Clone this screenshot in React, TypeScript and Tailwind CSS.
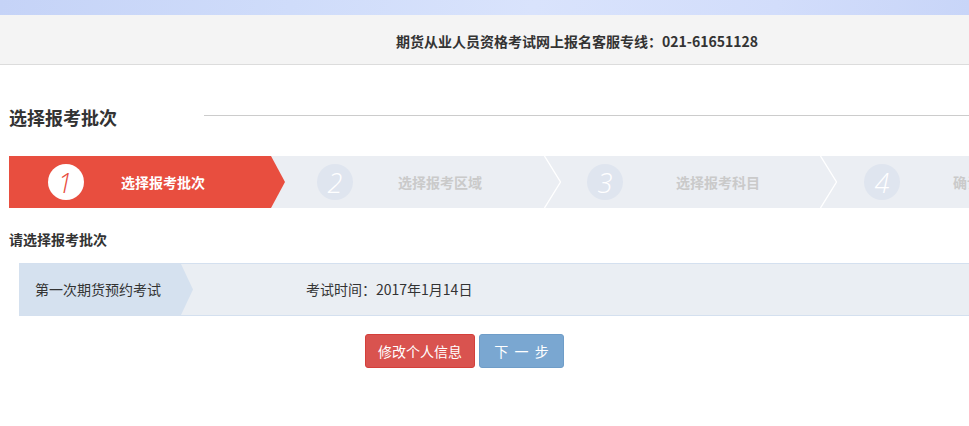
import React from "react";

const font = { fontFamily: '"Noto Sans CJK SC", "Noto Sans", sans-serif' };

function Chevron() {
  return (
    <svg width="17" height="52" viewBox="0 0 17 52" className="shrink-0">
      <polyline points="0.5,0 16.5,26 0.5,52" fill="none" stroke="#ffffff" strokeWidth="1.3" />
    </svg>
  );
}

export default function App() {
  return (
    <div className="w-[969px] h-[426px] bg-white overflow-hidden" style={font}>
      {/* banner */}
      <div className="h-[15px] bg-[linear-gradient(100deg,#c5d3f7_0%,#cfdcfa_30%,#d9e3fc_55%,#d2ddfb_80%,#c8d5f8_100%)]" />
      {/* header */}
      <div className="h-[50px] bg-[#f4f4f4] border-b border-[#dcdcdc] flex items-center pl-[396px] pt-[2px]">
        <span className="text-[14px] leading-[20px] font-bold text-[#333]">
          期货从业人员资格考试网上报名客服专线：021-61651128
        </span>
      </div>

      {/* title */}
      <div className="flex items-center mt-[39px] h-[26px]">
        <h2 className="pl-[9px] text-[18px] leading-[26px] font-bold text-[#333] w-[204px] shrink-0">选择报考批次</h2>
        <div className="flex-1 border-t border-[#cccccc] -mt-[3px]" />
      </div>

      {/* steps */}
      <div className="mt-[26px] ml-[9px] h-[52px] bg-[#ebeef3] flex items-center overflow-hidden whitespace-nowrap">
        <div className="w-[276px] h-[52px] shrink-0 bg-[#e84e3f] flex items-center [clip-path:polygon(0_0,262px_0,276px_50%,262px_100%,0_100%)]">
          <div className="ml-[39px] w-[36px] h-[36px] rounded-full bg-white flex items-center justify-center">
            <span className="text-[27px] leading-none italic font-light text-[#e84e3f] -ml-[2px]" style={{ fontFamily: '"Open Sans", sans-serif' }}>1</span>
          </div>
          <span className="ml-[37px] text-[14px] font-bold text-white">选择报考批次</span>
        </div>
        <div className="w-[259px] h-[52px] shrink-0 flex items-center">
          <div className="ml-[32px] w-[36px] h-[36px] rounded-full bg-[#dfe5ef] flex items-center justify-center">
            <span className="text-[27px] leading-none italic font-light text-white" style={{ fontFamily: '"Open Sans", sans-serif' }}>2</span>
          </div>
          <span className="ml-[45px] text-[14px] font-bold text-[#cacaca]">选择报考区域</span>
        </div>
        <Chevron />
        <div className="w-[259px] h-[52px] shrink-0 flex items-center">
          <div className="ml-[26px] w-[36px] h-[36px] rounded-full bg-[#dfe5ef] flex items-center justify-center">
            <span className="text-[27px] leading-none italic font-light text-white" style={{ fontFamily: '"Open Sans", sans-serif' }}>3</span>
          </div>
          <span className="ml-[53px] text-[14px] font-bold text-[#cacaca]">选择报考科目</span>
        </div>
        <Chevron />
        <div className="h-[52px] shrink-0 flex items-center">
          <div className="ml-[27px] w-[36px] h-[36px] rounded-full bg-[#dfe5ef] flex items-center justify-center">
            <span className="text-[27px] leading-none italic font-light text-white" style={{ fontFamily: '"Open Sans", sans-serif' }}>4</span>
          </div>
          <span className="ml-[53px] text-[14px] font-bold text-[#cacaca]">确认报考信息</span>
        </div>
      </div>

      {/* sub title */}
      <div className="mt-[21px] pl-[9px] text-[14px] leading-[20px] font-bold text-[#333]">请选择报考批次</div>

      {/* batch row */}
      <div className="mt-[14px] ml-[19px] h-[53px] border-y border-[#d4e0ef] bg-[#eaeef3] flex items-center">
        <div className="w-[174px] h-full shrink-0 bg-[#d5e1ef] flex items-center pl-[16px] [clip-path:polygon(0_0,162px_0,174px_50%,162px_100%,0_100%)]">
          <span className="text-[14px] text-[#333]">第一次期货预约考试</span>
        </div>
        <span className="ml-[113px] text-[14px] text-[#333]">考试时间：2017年1月14日</span>
      </div>

      {/* buttons */}
      <div className="mt-[18px] flex gap-[4px] pl-[365px]">
        <button className="w-[110px] h-[34px] rounded-[3px] bg-[#d9534f] border border-[#d43f3a] text-white text-[14px]">修改个人信息</button>
        <button className="w-[85px] h-[34px] rounded-[3px] bg-[#7aa7d1] border border-[#6f9dc8] text-white text-[14px] whitespace-pre">下  一  步</button>
      </div>
    </div>
  );
}
